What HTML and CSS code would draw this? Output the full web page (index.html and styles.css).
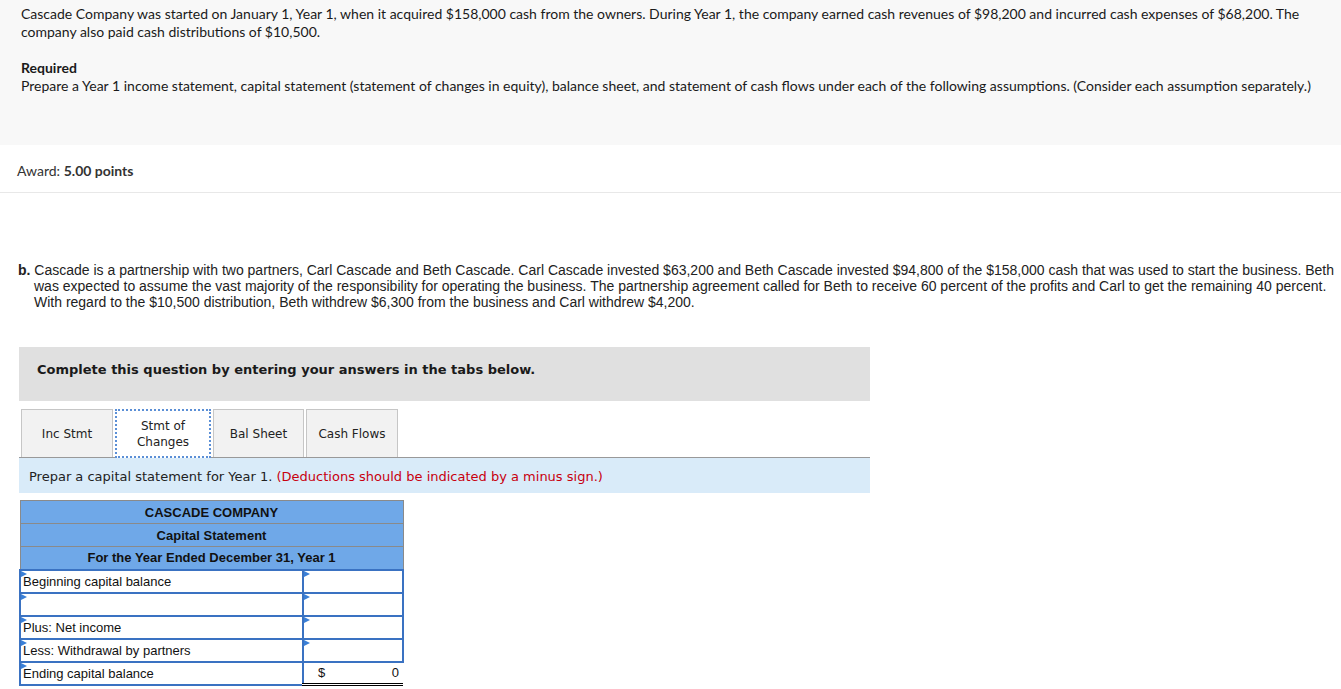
FILE: index.html
```html
<!DOCTYPE html>
<html lang="en">
<head>
  <meta charset="UTF-8">
  <title>Cascade Company</title>
  <link rel="stylesheet" href="styles.css">
</head>
<body>
  <!-- problem statement -->
  <div class="intro">
    <p>Cascade Company was started on January 1, Year 1, when it acquired $158,000 cash from the owners. During Year 1, the company earned cash revenues of $98,200 and incurred cash expenses of $68,200. The company also paid cash distributions of $10,500.</p>
    <p><strong>Required</strong><br>Prepare a Year 1 income statement, capital statement (statement of changes in equity), balance sheet, and statement of cash flows under each of the following assumptions. (Consider each assumption separately.)</p>
  </div>

  <div class="award">Award: <strong>5.00 points</strong></div>

  <div class="question">
    <p class="part"><b>b.</b> Cascade is a partnership with two partners, Carl Cascade and Beth Cascade. Carl Cascade invested $63,200 and Beth Cascade invested $94,800 of the $158,000 cash that was used to start the business. Beth was expected to assume the vast majority of the responsibility for operating the business. The partnership agreement called for Beth to receive 60 percent of the profits and Carl to get the remaining 40 percent. With regard to the $10,500 distribution, Beth withdrew $6,300 from the business and Carl withdrew $4,200.</p>

    <div class="tabs-box">
      <div class="tabs-title">Complete this question by entering your answers in the tabs below.</div>

      <div class="tabs">
        <div class="tab">Inc Stmt</div>
        <div class="tab active">Stmt of<br>Changes</div>
        <div class="tab">Bal Sheet</div>
        <div class="tab">Cash Flows</div>
      </div>

      <div class="instruction">Prepar a capital statement for Year 1. <span class="hint">(Deductions should be indicated by a minus sign.)</span></div>

      <table class="stmt">
        <tr class="head"><td colspan="2">CASCADE COMPANY</td></tr>
        <tr class="head"><td colspan="2">Capital Statement</td></tr>
        <tr class="head"><td colspan="2">For the Year Ended December 31, Year 1</td></tr>
        <tr><td class="label mark">Beginning capital balance</td><td class="val mark"></td></tr>
        <tr><td class="label mark"></td><td class="val mark"></td></tr>
        <tr><td class="label mark">Plus: Net income</td><td class="val mark"></td></tr>
        <tr><td class="label mark">Less: Withdrawal by partners</td><td class="val mark"></td></tr>
        <tr><td class="label mark">Ending capital balance</td><td class="val total"><span>$</span><span>0</span></td></tr>
      </table>
    </div>
  </div>
</body>
</html>
```

FILE: styles.css
```css
/* base */
* {
  box-sizing: border-box;
}
body {
  margin: 0;
  background: #fff;
  color: #1a1a1a;
  font-family: Lato, "Liberation Sans", sans-serif;
}

/* problem statement */
.intro {
  background: #f8f8f8;
  padding: 5px 21px 50px;
  height: 145px;
  font-size: 14px;
  line-height: 18px;
}
.intro p {
  margin: 0 0 18px;
}
.intro p:last-child {
  margin-bottom: 0;
}

.award {
  padding: 17px 17px 12px;
  font-size: 14px;
  line-height: 18px;
  color: #333;
  border-bottom: 1px solid #e8e8e8;
}

/* part b */
.question {
  padding: 0 6px 0 18px;
}
.part {
  margin: 69px 0 37px;
  padding-left: 16px;
  text-indent: -16px;
  font-family: "Liberation Sans", Arial, sans-serif;
  font-size: 14px;
  line-height: 16px;
  color: #222;
}

.tabs-box {
  width: 851px;
  margin-left: 1px;
}
.tabs-title {
  background: #e0e0e0;
  padding: 15px 18px 23px;
  font-family: "DejaVu Sans", Verdana, sans-serif;
  font-weight: bold;
  font-size: 13px;
  line-height: 16px;
}

.tabs {
  display: flex;
  gap: 2px;
  margin-top: 8px;
  padding-left: 2px;
  border-bottom: 1px solid #999;
}
.tab {
  display: flex;
  align-items: center;
  justify-content: center;
  text-align: center;
  width: 92px;
  height: 48px;
  background: #f2f2f2;
  border: 1px solid #c6c6c6;
  border-bottom: none;
  font-family: "DejaVu Sans", Verdana, sans-serif;
  font-size: 12px;
  line-height: 16px;
  color: #222;
}
.tab.active {
  width: 96px;
  background: #fff;
  border: 2px dotted #5b8fd6;
  margin-bottom: -1px;
  height: 49px;
}
.tab:nth-child(3) {
  width: 91px;
}

.instruction {
  background: #d9ebf9;
  height: 35px;
  padding: 10px 10px 0;
  font-family: "DejaVu Sans", Verdana, sans-serif;
  font-size: 13px;
  line-height: 17px;
  color: #222;
}
.hint {
  color: #c8000f;
}

/* capital statement */
.stmt {
  margin-top: 7px;
  width: 385px;
  border-collapse: collapse;
  font-family: "Liberation Sans", Arial, sans-serif;
  font-size: 13px;
  color: #111;
}
.stmt td {
  height: 23px;
  padding: 0 3px;
}
.stmt .head td {
  background: #6fa8e8;
  border: 1px solid #8a8a8a;
  text-align: center;
  font-weight: bold;
}
.stmt .label {
  width: 283px;
  border: 2px solid #3a72c2;
  padding: 0 2px;
}
.stmt .val {
  border: 2px solid #3a72c2;
}
.mark {
  position: relative;
}
.mark::before {
  content: "";
  position: absolute;
  left: 0;
  top: 0;
  border-left: 6px solid #3a7fd6;
  border-top: 3px solid transparent;
  border-bottom: 3px solid transparent;
}
.stmt .total {
  border-top: 1px solid #000;
  border-right: none;
  border-bottom: 3px double #000;
  padding: 0 4px 0 14px;
}
.total span {
  display: inline-block;
}
.total span:last-child {
  float: right;
}
```
